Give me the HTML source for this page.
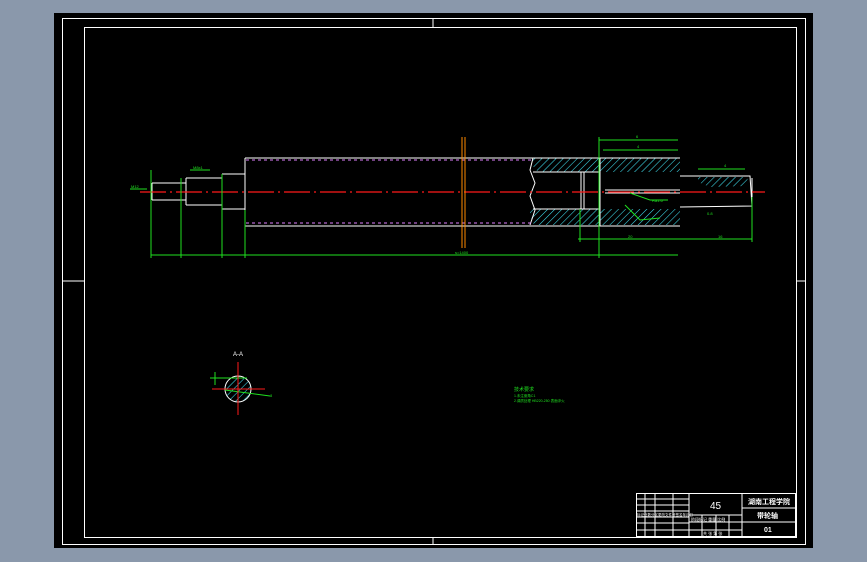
<!DOCTYPE html>
<html><head><meta charset="utf-8"><style>
html,body{margin:0;padding:0;background:#8a98ab;width:867px;height:562px;overflow:hidden}
svg{display:block}
text{font-family:"Liberation Sans","Noto Sans CJK SC",sans-serif}
</style></head><body>
<svg width="867" height="562" viewBox="0 0 867 562" xmlns="http://www.w3.org/2000/svg">
<defs>
<pattern id="h" width="5" height="5" patternUnits="userSpaceOnUse" patternTransform="rotate(45)">
<line x1="0" y1="0" x2="0" y2="5" stroke="#40e0f0" stroke-width="1.1"/></pattern>
</defs>
<rect x="54" y="13" width="759" height="535" fill="#000"/>
<rect x="62.5" y="18.5" width="743" height="526" fill="none" stroke="#fff" stroke-width="1"/>
<rect x="84.5" y="27.5" width="712" height="510" fill="none" stroke="#fff" stroke-width="1"/>
<g stroke="#fff" stroke-width="1">
<line x1="433" y1="18" x2="433" y2="27"/><line x1="433" y1="537" x2="433" y2="544"/>
<line x1="62" y1="281" x2="84" y2="281"/><line x1="796" y1="281" x2="805" y2="281"/>
</g>
<path d="M533 158 L600 158 L600 172 L538 172 L532 165 Z" fill="url(#h)"/>
<path d="M600 158 L680 158 L680 172 L600 172 Z" fill="url(#h)"/>
<path d="M530 209 L680 209 L680 225 L534 225 L530 215 Z" fill="url(#h)"/>
<path d="M698 177 L748 177 L746 186 L710 187 L698 182 Z" fill="url(#h)"/>
<circle cx="238" cy="389" r="13" fill="url(#h)" stroke="#fff" stroke-width="1"/>
<g stroke="#fff" stroke-width="1" fill="none">
<path d="M245 158 L680 158 M245 226 L680 226 M245 158 L245 227"/>
<path d="M222 174 L245 174 M222 209 L245 209 M222 174 L222 209"/>
<path d="M186 178 L222 178 M186 205 L222 205 M186 178 L186 205"/>
<path d="M152 183 L186 183 M152 200 L186 200 M152 183 L152 200"/>
<path d="M533 172 L600 172 M533 209 L600 209 M533 158 L530 170 L535 183 L530 196 L535 210 L530 225"/>
<path d="M581 172 L581 209 M600 158 L600 226 M584 172 L584 209"/>
<path d="M605 190 L680 190 M605 193 L680 193"/>
<path d="M680 176 L750 176 L752 206 L680 207"/>
<path d="M752 178 L752 206"/>
</g>
<g stroke="#e080ff" stroke-width="1" stroke-dasharray="3,3">
<line x1="246" y1="160" x2="533" y2="160"/><line x1="246" y1="223" x2="533" y2="223"/>
</g>
<line x1="140" y1="192" x2="765" y2="192" stroke="#ff1a1a" stroke-width="1.2" stroke-dasharray="26,4,2,4"/>
<g stroke="#ff8a00" stroke-width="1"><line x1="462" y1="137" x2="462" y2="248"/><line x1="465" y1="137" x2="465" y2="248"/></g>
<g stroke="#1fe01f" stroke-width="1" fill="none">
<line x1="151" y1="255" x2="678" y2="255"/>
<line x1="151" y1="170" x2="151" y2="258"/><line x1="181" y1="178" x2="181" y2="258"/>
<line x1="222" y1="174" x2="222" y2="258"/><line x1="245" y1="210" x2="245" y2="258"/>
<line x1="599" y1="137" x2="599" y2="258"/><line x1="599" y1="140" x2="678" y2="140"/>
<line x1="603" y1="150" x2="678" y2="150"/><line x1="578" y1="239" x2="752" y2="239"/>
<line x1="580" y1="209" x2="580" y2="242"/><line x1="752" y1="197" x2="752" y2="242"/>
<line x1="698" y1="169" x2="745" y2="169"/>
<line x1="130" y1="189" x2="147" y2="189"/><line x1="190" y1="170" x2="210" y2="170"/>
<path d="M625 205 L640 220 L660 218"/><path d="M630 193 L650 200 L668 200"/>
<line x1="210" y1="378" x2="247" y2="378"/><line x1="215" y1="372" x2="215" y2="385"/>
<line x1="225" y1="390" x2="270" y2="396"/>
</g>
<g fill="#1fe01f" font-size="4">
<text x="131" y="188">M12</text><text x="193" y="169">M8x1</text><text x="455" y="254">s=1400</text>
<text x="636" y="138">6</text><text x="637" y="148">4</text><text x="628" y="238">20</text><text x="718" y="238">16</text>
<text x="724" y="167">4</text><text x="652" y="202">Ra1.6</text><text x="707" y="215">0.8</text>
<text x="270" y="397">8</text>
<text x="514" y="391" font-size="5">技术要求</text>
<text x="514" y="397" font-size="3.5">1.未注倒角C1</text>
<text x="514" y="402" font-size="3.5">2.调质处理 HB220-250 表面淬火</text>
</g>
<text x="233" y="356" fill="#fff" font-size="6">A-A</text>
<g stroke="#ff1a1a" stroke-width="1"><line x1="238" y1="362" x2="238" y2="415"/><line x1="212" y1="389" x2="265" y2="389"/></g>
<g stroke="#fff" stroke-width="1" fill="none">
<rect x="636.5" y="493.5" width="159" height="43"/>
<line x1="689" y1="493" x2="689" y2="537"/><line x1="742" y1="493" x2="742" y2="537"/>
<line x1="742" y1="508" x2="796" y2="508"/><line x1="742" y1="522" x2="796" y2="522"/>
<line x1="689" y1="515" x2="742" y2="515"/><line x1="689" y1="522" x2="742" y2="522"/><line x1="689" y1="530" x2="742" y2="530"/>
<line x1="636" y1="499" x2="689" y2="499"/><line x1="636" y1="505" x2="689" y2="505"/><line x1="636" y1="511" x2="689" y2="511"/>
<line x1="636" y1="517" x2="689" y2="517"/><line x1="636" y1="523" x2="689" y2="523"/><line x1="636" y1="530" x2="689" y2="530"/>
<line x1="645" y1="493" x2="645" y2="537"/><line x1="655" y1="493" x2="655" y2="537"/><line x1="673" y1="493" x2="673" y2="537"/>
<line x1="702" y1="515" x2="702" y2="537"/><line x1="716" y1="515" x2="716" y2="537"/><line x1="729" y1="515" x2="729" y2="537"/>
</g>
<g fill="#fff">
<text x="710" y="509" font-size="10">45</text>
<text x="748" y="504" font-size="7" font-weight="bold">湖南工程学院</text>
<text x="757" y="518" font-size="7" font-weight="bold">带轮轴</text>
<text x="764" y="532" font-size="7" font-weight="bold">01</text>
<text x="637" y="516" font-size="3.5">标记处数分区更改文件号签名年月日</text>
<text x="691" y="521" font-size="4">阶段标记 重量 比例</text>
<text x="703" y="535" font-size="4">共 张 第 张</text>
</g>
</svg>
</body></html>
